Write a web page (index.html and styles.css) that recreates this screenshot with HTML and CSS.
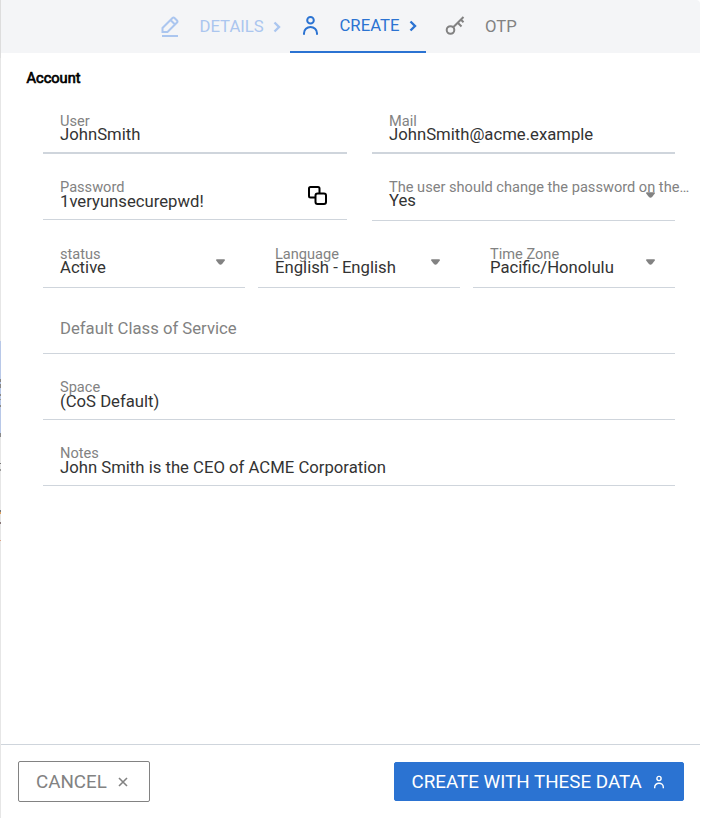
FILE: index.html
```
<!DOCTYPE html>
<html lang="en">
<head>
<meta charset="utf-8">
<title>Create account</title>
<link rel="stylesheet" href="styles.css">
</head>
<body>
<div class="backdrop"></div>
<main class="panel">
  <nav class="steps">
    <div class="step details">
      <svg class="icon" viewBox="0 0 20 22"><path d="M2 20h16M2.500 16v-4L12.500 2q1-1 2 0L17 4.500q1 1 0 2L7.500 16zM10.500 4l4.500 4.500"/></svg>
      <span>DETAILS</span>
      <svg class="chevron" viewBox="0 0 8 12"><path d="M1.500 1.500 6 6l-4.500 4.500"/></svg>
    </div>
    <div class="step create">
      <svg class="icon" viewBox="0 0 20 22"><circle cx="10.500" cy="5.300" r="3.300"/><path d="M4 19.700v-1.500a6.300 6 0 0 1 13 0v1.500"/></svg>
      <span>CREATE</span>
      <svg class="chevron" viewBox="0 0 8 12"><path d="M1.500 1.500 6 6l-4.500 4.500"/></svg>
    </div>
    <div class="step otp">
      <svg class="icon" viewBox="0 0 20 22"><circle cx="5.500" cy="15" r="3.800"/><path d="M8.200 12.300 18.500 2M13 8l3.500 3.500M16 4.700l2.500 2.500"/></svg>
      <span>OTP</span>
    </div>
  </nav>
  <section class="content">
    <h1>Account</h1>
    <form class="form">
      <div class="row two">
        <div class="field thick"><label>User</label><div class="value">JohnSmith</div></div>
        <div class="field thick"><label>Mail</label><div class="value">JohnSmith@acme.example</div></div>
      </div>
      <div class="row two second">
        <div class="field password"><label>Password</label><div class="value">1veryunsecurepwd!</div>
          <svg class="copy" viewBox="0 0 19 19"><path d="M7 11.500H2.500Q1 11.500 1 10V2.500Q1 1 2.500 1H10q1.500 0 1.500 1.500V7"/><rect x="7.500" y="7.500" width="10.500" height="10.500" rx="2"/></svg>
        </div>
        <div class="field change"><label>The user should change the password on the…</label><div class="value">Yes</div><svg class="arrow" viewBox="0 0 10 6"><path d="M1 0h8q1 0 1 1L7 5q-2 2-4 0L0 1q0-1 1-1"/></svg></div>
      </div>
      <div class="row three">
        <div class="field"><label>status</label><div class="value">Active</div><svg class="arrow" viewBox="0 0 10 6"><path d="M1 0h8q1 0 1 1L7 5q-2 2-4 0L0 1q0-1 1-1"/></svg></div>
        <div class="field"><label>Language</label><div class="value">English - English</div><svg class="arrow" viewBox="0 0 10 6"><path d="M1 0h8q1 0 1 1L7 5q-2 2-4 0L0 1q0-1 1-1"/></svg></div>
        <div class="field"><label>Time Zone</label><div class="value">Pacific/Honolulu</div><svg class="arrow" viewBox="0 0 10 6"><path d="M1 0h8q1 0 1 1L7 5q-2 2-4 0L0 1q0-1 1-1"/></svg></div>
      </div>
      <div class="row"><div class="field empty"><div class="value">Default Class of Service</div></div></div>
      <div class="row"><div class="field low"><label>Space</label><div class="value">(CoS Default)</div></div></div>
      <div class="row"><div class="field low"><label>Notes</label><div class="value">John Smith is the CEO of ACME Corporation</div></div></div>
    </form>
  </section>
  <footer class="actions">
    <button class="button cancel" type="button"><span>CANCEL</span><svg viewBox="0 0 10 10"><path d="m1 1 8 8M9 1 1 9"/></svg></button>
    <button class="button submit" type="button"><span>CREATE WITH THESE DATA</span><svg viewBox="0 0 12 14"><circle cx="6" cy="3.500" r="2.100"/><path d="M1.700 13.200v-1a4.300 4 0 0 1 8.600 0v1"/></svg></button>
  </footer>
</main>
</body>
</html>
```
FILE: styles.css
```
* { box-sizing: border-box; }
body {
  margin: 0;
  height: 818px;
  display: flex;
  background: #fff;
  color: #333;
  font-family: Roboto, "Liberation Sans", sans-serif;
  font-size: 16.72px;
}
svg { fill: none; stroke: currentColor; stroke-width: 2; flex: none; stroke-linecap: butt; }
.backdrop {
  width: 1px;
  background: linear-gradient(#ddd 58px, #e6e6e6 58px 341px, #b8c8e8 341px 379px, #888 379px 382px, #b8c8e8 382px 384px, #888 384px 388px, #b8c8e8 388px 394px, #888 394px 396px, #b8c8e8 396px 399px, #999 399px 400px, #b8c8e8 400px 405px, #888 405px 407px, #b8c8e8 407px 433px, #888 433px 437px, #e6e6e6 437px 463px, #777 463px 464px, #e6e6e6 464px 469px, #999 469px 471px, #e6e6e6 471px 510px, #777 510px 512px, #dba060 512px 514px, #e6e6e6 514px 522px, #877 522px 524px, #e6e6e6 524px 540px, #dfa080 540px 541px, #e6e6e6 541px);
}
.panel { width: 699px; display: flex; flex-direction: column; }
.steps {
  height: 53px;
  display: flex;
  padding-left: 153px;
  background: #f4f5f7;
  border-radius: 0 4px 0 0;
}
.step { width: 136px; display: flex; align-items: center; border-bottom: 2px solid transparent; font-size: 16.7px; }
.icon { width: 20px; height: 22px; }
.chevron { width: 8px; height: 12px; stroke-width: 2.4; }
.step span { line-height: 19px; padding-bottom: 1px; }
.details { color: #abc6ef; padding: 2px 0 0 6px; }
.details span { margin: 0 9px 0 19.5px; }
.create { color: #2b73d2; border-color: #2b73d2; padding-left: 10px; }
.create span { margin: 0 9.5px 0 19.5px; }
.otp { color: #828282; padding: 2px 0 0 19px; }
.otp .icon { margin-bottom: 1px; }
.otp span { margin-left: 20px; }
.content { flex: 1; }
h1 {
  margin: 16px 0 0 25.5px;
  color: #000;
  font-size: 14.6px;
  font-weight: 400;
  -webkit-text-stroke: 0.7px #000;
  line-height: 18px;
}
.form { margin: 1px 25px 0 42px; }
.row { display: grid; height: 66px; }
.two { grid-template-columns: 304px 303px; column-gap: 25px; }
.second { height: 67px; }
.three { grid-template-columns: repeat(3, 202px); column-gap: 13px; height: 67px; }
.field {
  position: relative;
  display: flex;
  flex-direction: column;
  justify-content: flex-end;
  padding: 0 0 13px 17px;
  border-bottom: 1px solid #cfd5dc;
  white-space: nowrap;
}
.thick { border-bottom-width: 2px; padding-bottom: 11px; }
.password { height: 66px; padding-bottom: 11px; }
.low { padding-bottom: 11px; }
label { color: #828282; font-size: 14.6px; line-height: 14px; }
.password label, .low label { margin-bottom: 1px; }
.value { line-height: 13px; }
.empty { color: #828282; padding-bottom: 18px; }
.arrow {
  position: absolute;
  right: 20px;
  bottom: 22px;
  width: 9px;
  height: 6px;
  color: #828282;
  fill: currentColor;
  stroke: none;
}
.copy { position: absolute; right: 20px; bottom: 14px; width: 19px; height: 19px; color: #000; }
.actions {
  height: 74px;
  display: flex;
  justify-content: space-between;
  align-items: center;
  padding: 0 16px 0 17px;
  border-top: 1px solid #cfd5dc;
}
.button {
  display: flex;
  align-items: center;
  height: 41px;
  padding: 0 17px;
  border: 1px solid #828282;
  border-radius: 2px;
  background: #fff;
  color: #828282;
  font: 400 18.8px Roboto, "Liberation Sans", sans-serif;
}
.cancel { width: 132px; }
.cancel svg { width: 10px; height: 10px; margin-left: 11px; stroke-width: 1.6; }
.submit { width: 290px; height: 39px; padding-left: 16.5px; border-color: #2b73d2; background: #2b73d2; color: #fff; }
.submit svg { width: 12px; height: 14px; margin-left: 11px; stroke-width: 1.4; }
```
